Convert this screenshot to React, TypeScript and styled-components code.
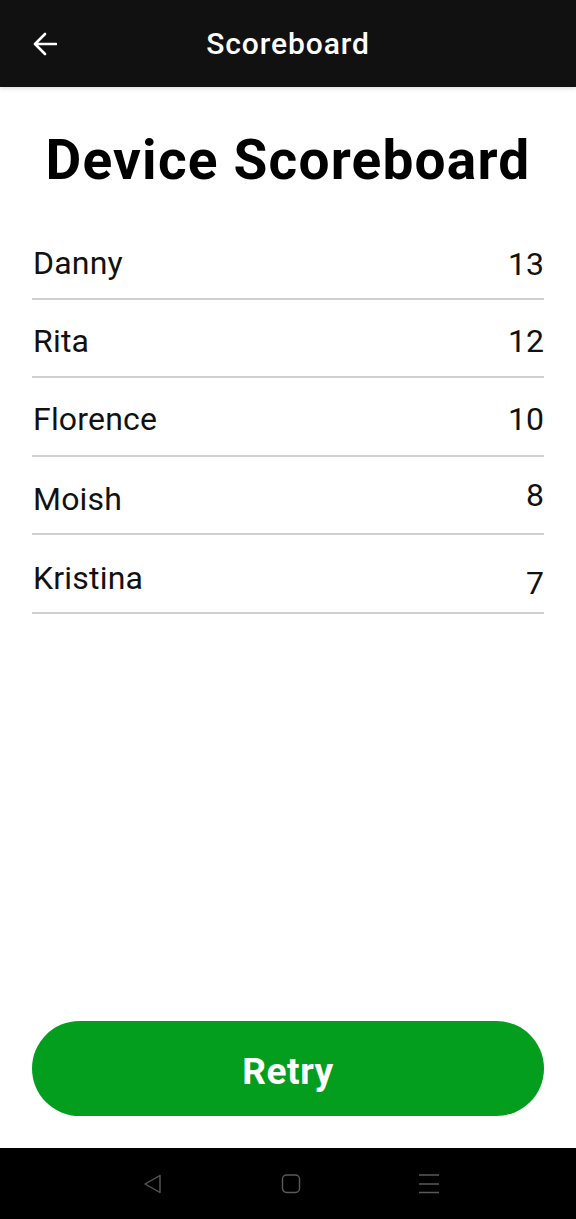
import React from "react";
import styled, { createGlobalStyle } from "styled-components";

const Global = createGlobalStyle`
  html, body { margin: 0; padding: 0; background: #fff; }
  body { font-family: Roboto, "Noto Sans", sans-serif; }
  #root { width: 576px; height: 1219px; }
`;

const Screen = styled.div`
  width: 576px;
  height: 1219px;
  display: flex;
  flex-direction: column;
  background: #fff;
  overflow: hidden;
`;

const AppBar = styled.header`
  height: 87px;
  flex: none;
  background: #111111;
  display: flex;
  align-items: center;
  position: relative;
  box-shadow: 0 2px 4px rgba(0, 0, 0, 0.12);
  z-index: 1;
`;

const BackButton = styled.div`
  width: 24px;
  height: 24px;
  margin-left: 33px;
  display: flex;
`;

const BarTitle = styled.h1`
  position: absolute;
  left: 0;
  right: 0;
  text-align: center;
  margin: 0;
  color: #fff;
  font-family: Roboto, sans-serif;
  font-weight: 500;
  font-size: 30px;
  letter-spacing: 0.9px;
  pointer-events: none;
`;

const Content = styled.main`
  flex: 1;
  display: flex;
  flex-direction: column;
  padding: 0 32px;
`;

const Heading = styled.h2`
  margin: 38px 0 26px;
  text-align: center;
  font-family: Roboto, sans-serif;
  font-weight: 700;
  font-size: 55px;
  line-height: 70px;
  color: #000;
  letter-spacing: 1.2px;
`;

const List = styled.div`
  display: flex;
  flex-direction: column;
`;

const Row = styled.div`
  height: 76.5px;
  display: flex;
  align-items: center;
  justify-content: space-between;
  border-bottom: 2px solid #d0d0d0;
  font-family: Roboto, sans-serif;
  font-size: 32px;
  letter-spacing: 0.2px;
  color: #111;
`;

const Name = styled.span<{ $dy: number }>`
  padding-left: 1px;
  transform: translateY(${(p) => p.$dy}px);
`;

const Score = styled.span<{ $dy: number }>`
  letter-spacing: 0;
  transform: translateY(${(p) => p.$dy}px);
`;

const Spacer = styled.div`
  flex: 1;
`;

const RetryButton = styled.button`
  height: 95px;
  margin-bottom: 32px;
  padding: 6px 0 0;
  border: none;
  border-radius: 48px;
  background: #049e1f;
  color: #fff;
  font-family: Roboto, sans-serif;
  font-weight: 700;
  font-size: 37px;
  letter-spacing: 0.6px;
  cursor: pointer;
`;

const NavBar = styled.nav`
  height: 71px;
  flex: none;
  background: #000;
  display: flex;
  align-items: center;
  justify-content: center;
  gap: 118px;
  padding-left: 6px;
`;

const NavIcon = styled.div`
  width: 20px;
  height: 20px;
  display: flex;
`;

const players = [
  { name: "Danny", score: 13, nd: 4, sd: 5 },
  { name: "Rita", score: 12, nd: 3, sd: 3 },
  { name: "Florence", score: 10, nd: 3, sd: 3 },
  { name: "Moish", score: 8, nd: 4, sd: 0 },
  { name: "Kristina", score: 7, nd: 5, sd: 10 },
];

export default function App() {
  return (
    <Screen>
      <Global />
      <AppBar>
        <BackButton>
          <svg width="24" height="24" viewBox="0 0 24 24" fill="none">
            <path d="M23 12H2.5M12 2L2 12l10 10" stroke="#fff" strokeWidth="2.6" strokeLinecap="round" strokeLinejoin="round" />
          </svg>
        </BackButton>
        <BarTitle>Scoreboard</BarTitle>
      </AppBar>
      <Content>
        <Heading>Device Scoreboard</Heading>
        <List>
          {players.map((p) => (
            <Row key={p.name}>
              <Name $dy={p.nd}>{p.name}</Name>
              <Score $dy={p.sd}>{p.score}</Score>
            </Row>
          ))}
        </List>
        <Spacer />
        <RetryButton>Retry</RetryButton>
      </Content>
      <NavBar>
        <NavIcon>
          <svg width="20" height="20" viewBox="0 0 20 20" fill="none">
            <path d="M17 1.5L2 10l15 8.5z" stroke="#5a5a5a" strokeWidth="1.4" strokeLinejoin="round" />
          </svg>
        </NavIcon>
        <NavIcon>
          <svg width="20" height="20" viewBox="0 0 20 20" fill="none">
            <rect x="1.5" y="1" width="17" height="17.5" rx="4" stroke="#5a5a5a" strokeWidth="1.4" />
          </svg>
        </NavIcon>
        <NavIcon>
          <svg width="20" height="20" viewBox="0 0 20 20" fill="none">
            <path d="M0 1h20M0 10h20M0 18.5h20" stroke="#5a5a5a" strokeWidth="1.4" />
          </svg>
        </NavIcon>
      </NavBar>
    </Screen>
  );
}
